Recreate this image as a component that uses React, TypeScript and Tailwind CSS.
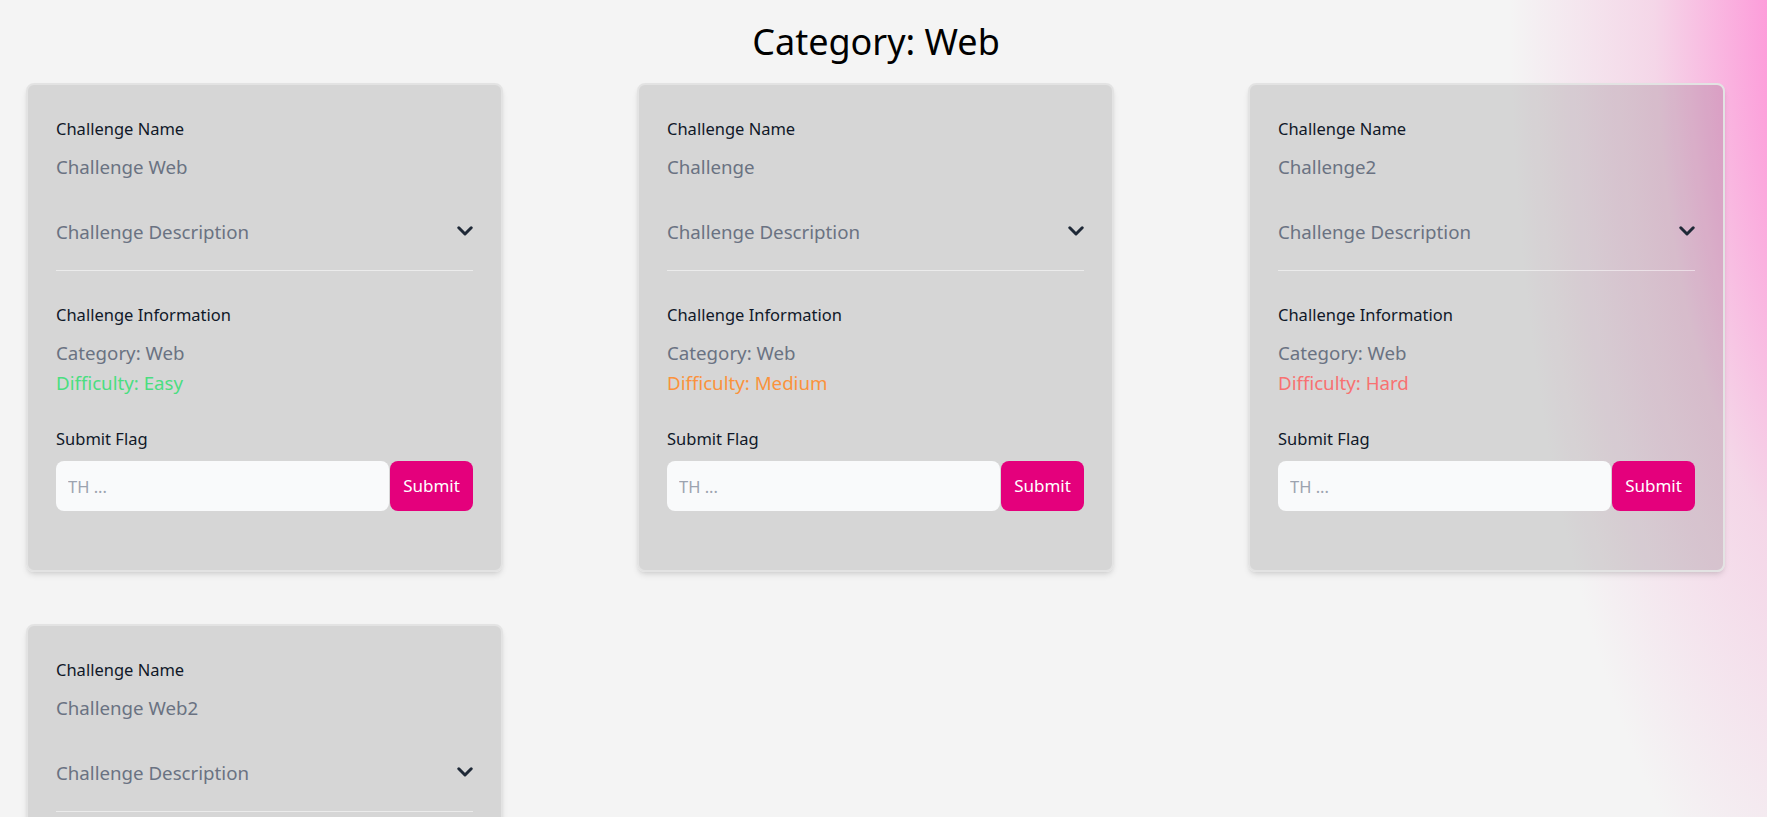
import React from "react";

type Challenge = {
  name: string;
  difficulty: "Easy" | "Medium" | "Hard";
};

const challenges: Challenge[] = [
  { name: "Challenge Web", difficulty: "Easy" },
  { name: "Challenge", difficulty: "Medium" },
  { name: "Challenge2", difficulty: "Hard" },
  { name: "Challenge Web2", difficulty: "Easy" },
];

const difficultyColor: Record<Challenge["difficulty"], string> = {
  Easy: "text-[#4ade80]",
  Medium: "text-[#fb923c]",
  Hard: "text-[#f87171]",
};

function ChevronDown() {
  return (
    <svg width="16" height="10" viewBox="0 0 16 10" fill="none" className="shrink-0">
      <polyline
        points="1.8,1.8 8,8 14.2,1.8"
        stroke="#1f2937"
        strokeWidth="3"
        strokeLinecap="round"
        strokeLinejoin="round"
      />
    </svg>
  );
}

function ChallengeCard({ challenge }: { challenge: Challenge }) {
  return (
    <div className="w-[477px] rounded-lg border-2 border-[#e3e3e3] bg-black/[0.12] px-[28px] pt-[31px] pb-[59px] shadow-md">
      <p className="text-[16.5px] leading-[26px] text-gray-900">Challenge Name</p>
      <p className="mt-[10px] text-[18.7px] leading-[30px] text-gray-500">{challenge.name}</p>

      <div className="mt-[35px] flex items-center justify-between">
        <p className="text-[18.7px] leading-[30px] text-gray-500">Challenge Description</p>
        <div className="-mt-[3px]">
          <ChevronDown />
        </div>
      </div>

      <div className="mt-[23px] h-px bg-white/50" />

      <p className="mt-[31px] text-[16.5px] leading-[26px] text-gray-900">Challenge Information</p>
      <p className="mt-[10px] text-[18.7px] leading-[30px] text-gray-500">Category: Web</p>
      <p className={`text-[18.7px] leading-[30px] ${difficultyColor[challenge.difficulty]}`}>
        Difficulty: {challenge.difficulty}
      </p>

      <p className="mt-[28px] text-[16.5px] leading-[26px] text-gray-900">Submit Flag</p>
      <div className="mt-[9px] flex h-[50px] gap-px">
        <input
          type="text"
          placeholder="TH ..."
          className="h-full min-w-0 flex-1 rounded-lg bg-[#f9fafb] px-3 text-[16.5px] text-gray-900 outline-none placeholder:text-[#9ca3af]"
        />
        <button className="h-full w-[83px] rounded-lg bg-[#e4007c] text-[17px] text-white">
          Submit
        </button>
      </div>
    </div>
  );
}

export default function App() {
  return (
    <div
      className="relative h-screen w-full overflow-hidden bg-[#f4f4f4]"
      style={{ fontFamily: '"Noto Sans", "Open Sans", sans-serif' }}
    >
      <div className="pointer-events-none absolute inset-0 bg-[radial-gradient(ellipse_360px_1000px_at_1870px_0px,#ff7fd2_0%,#fd9cda_28%,rgba(245,190,222,0.55)_60%,rgba(244,244,244,0)_100%)]" />

      <div className="relative pt-[18px]">
        <h1 className="pr-[15px] text-center text-[36px] leading-[48px] text-black">Category: Web</h1>

        <div className="mt-[17px] grid grid-cols-[repeat(3,477px)] gap-x-[134px] gap-y-[52px] pl-[26px]">
          {challenges.map((c) => (
            <ChallengeCard key={c.name} challenge={c} />
          ))}
        </div>
      </div>
    </div>
  );
}
